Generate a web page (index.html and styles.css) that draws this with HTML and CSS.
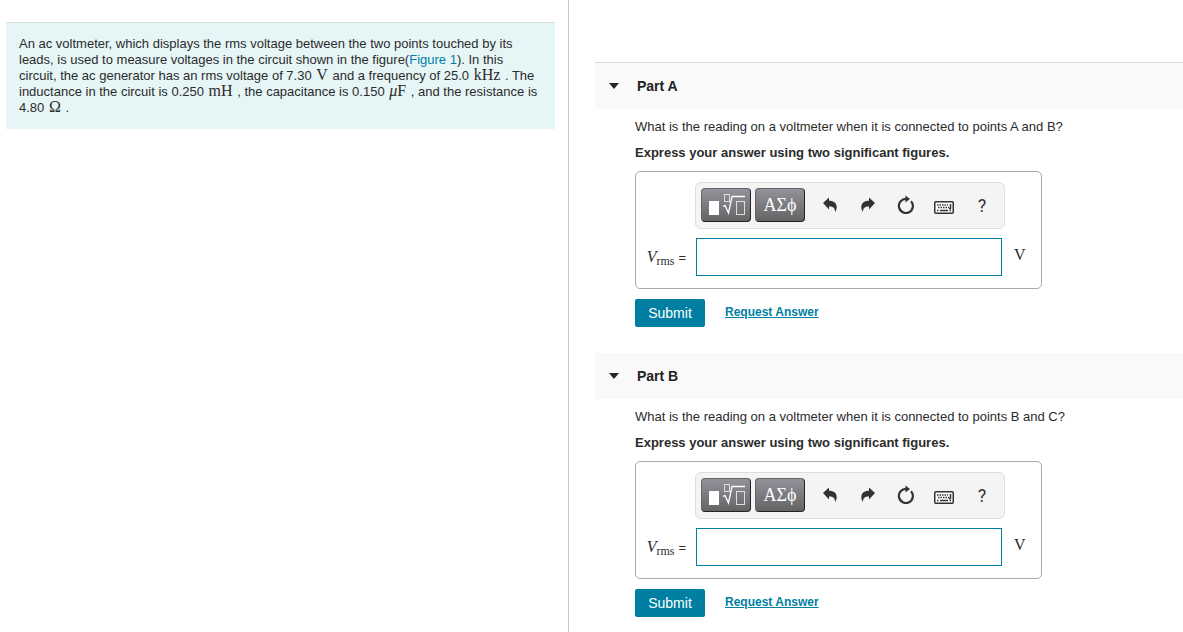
FILE: index.html
```html
<!DOCTYPE html>
<html lang="en">

<head>
  <meta charset="utf-8">
  <meta name="viewport" content="width=device-width">
  <title>Voltmeter Readings</title>
  <link rel="stylesheet" href="styles.css">
</head>

<body>
  <!-- Icons shared by both toolbars -->
  <svg class="icon-defs" width="0" height="0" aria-hidden="true">
    <symbol id="icon-templates" viewBox="0 0 40 24">
      <rect x="3" y="8" width="10" height="14" fill="#fff"/>
      <rect x="18.500" y="1.500" width="5" height="7" fill="none" stroke="#ddd"/>
      <path d="M17 13.500l2-1 3.500 7.500L26 3.500h13" fill="none" stroke="#fff" stroke-width="1.300"/>
      <rect x="30.500" y="8.500" width="8" height="13" fill="none" stroke="#ddd"/>
    </symbol>
    <symbol id="icon-undo" viewBox="0 0 14 16">
      <path d="M0 6L6 .5v3.200c5 0 7.700 2.300 7.700 6.300 0 2-.6 3.600-1.700 5 .2-3.500-1.500-5.500-6-5.500v3z" fill="#333"/>
    </symbol>
    <symbol id="icon-reset" viewBox="0 0 18 20">
      <path d="M14 6.200A7 7 0 1 1 9.500 4" fill="none" stroke="#333" stroke-width="2.200"/>
      <path d="M8.500 .5l4.500 3.500-4.500 3.500z" fill="#333"/>
    </symbol>
    <symbol id="icon-keyboard" viewBox="0 0 20 13">
      <rect x=".75" y=".75" width="18.500" height="11.500" rx="1" fill="#fff" stroke="#333" stroke-width="1.500"/>
      <path d="M3 4h11M4 6.500h11" stroke="#333" stroke-width="1.500" stroke-dasharray="1.500 1"/>
      <path d="M3 9.500h1.500M6 9.500h8M15.500 9.500H17M16.500 3v4.500H15" fill="none" stroke="#333" stroke-width="1.500"/>
    </symbol>
  </svg>

  <div class="page">
    <section class="left-pane">
      <div class="problem">
        An ac voltmeter, which displays the rms voltage between the two points touched by its leads, is used to measure voltages in the circuit shown in the figure(<a href="#">Figure 1</a>). In this circuit, the ac generator has an rms voltage of 7.30 <span class="math">V</span> and a frequency of 25.0 <span class="math">kHz</span> . The inductance in the circuit is 0.250 <span class="math">mH</span> , the capacitance is 0.150 <span class="math"><i>μ</i>F</span> , and the resistance is 4.80 <span class="math">Ω</span> .
      </div>
    </section>

    <main class="right-pane">
      <!-- Part A -->
      <section class="part">
        <h2 class="part-header first"><span class="arrow"></span>Part A</h2>
        <div class="part-body">
          <p>What is the reading on a voltmeter when it is connected to points A and B?</p>
          <p class="instructions">Express your answer using two significant figures.</p>
          <div class="answer-box">
            <div class="toolbar">
              <button class="dark-button" type="button" aria-label="Templates"><svg width="40" height="24"><use href="#icon-templates"/></svg></button>
              <button class="dark-button greek" type="button">ΑΣϕ</button>
              <button class="tool" type="button" aria-label="Undo"><svg width="14" height="16"><use href="#icon-undo"/></svg></button>
              <button class="tool" type="button" aria-label="Redo"><svg class="flip" width="14" height="16"><use href="#icon-undo"/></svg></button>
              <button class="tool" type="button" aria-label="Reset"><svg width="18" height="20"><use href="#icon-reset"/></svg></button>
              <button class="tool keyboard" type="button" aria-label="Keyboard shortcuts"><svg width="20" height="13"><use href="#icon-keyboard"/></svg></button>
              <button class="tool help" type="button">?</button>
            </div>
            <label class="symbol" for="answerA"><i>V</i><sub>rms</sub> <span class="equals">=</span></label>
            <input class="answer" type="text" id="answerA">
            <span class="unit">V</span>
          </div>
          <div class="actions">
            <button class="submit" type="button">Submit</button>
            <a class="request" href="#">Request Answer</a>
          </div>
        </div>
      </section>

      <!-- Part B -->
      <section class="part">
        <h2 class="part-header"><span class="arrow"></span>Part B</h2>
        <div class="part-body">
          <p>What is the reading on a voltmeter when it is connected to points B and C?</p>
          <p class="instructions">Express your answer using two significant figures.</p>
          <div class="answer-box">
            <div class="toolbar">
              <button class="dark-button" type="button" aria-label="Templates"><svg width="40" height="24"><use href="#icon-templates"/></svg></button>
              <button class="dark-button greek" type="button">ΑΣϕ</button>
              <button class="tool" type="button" aria-label="Undo"><svg width="14" height="16"><use href="#icon-undo"/></svg></button>
              <button class="tool" type="button" aria-label="Redo"><svg class="flip" width="14" height="16"><use href="#icon-undo"/></svg></button>
              <button class="tool" type="button" aria-label="Reset"><svg width="18" height="20"><use href="#icon-reset"/></svg></button>
              <button class="tool keyboard" type="button" aria-label="Keyboard shortcuts"><svg width="20" height="13"><use href="#icon-keyboard"/></svg></button>
              <button class="tool help" type="button">?</button>
            </div>
            <label class="symbol" for="answerB"><i>V</i><sub>rms</sub> <span class="equals">=</span></label>
            <input class="answer" type="text" id="answerB">
            <span class="unit">V</span>
          </div>
          <div class="actions">
            <button class="submit" type="button">Submit</button>
            <a class="request" href="#">Request Answer</a>
          </div>
        </div>
      </section>
    </main>
  </div>
</body>

</html>
```

FILE: styles.css
```css
* {
  box-sizing: border-box;
}

body {
  margin: 0;
  background: #fff;
  color: #2b2b2b;
  font-family: "Liberation Sans", Arial, sans-serif;
  font-size: 13px;
  line-height: 16px;
}

.icon-defs {
  display: none;
}

a {
  color: #007fa3;
  text-decoration: none;
}

/* Two panes side by side */
.page {
  display: grid;
  grid-template-columns: 569px 1fr;
  min-height: 100vh;
}

.left-pane {
  padding: 22px 13px 0 6px;
  border-right: 1px solid #b4c8d9;
}

.right-pane {
  padding: 62px 0 0 26px;
}

.problem {
  padding: 13px;
  border-top: 1px solid #d9dede;
  background: #e6f6f7;
}

.math {
  padding: 0 1px;
  font-family: "Liberation Serif", "Times New Roman", serif;
  font-size: 16px;
  line-height: 14px;
}

/* Part headers */
.part-header {
  display: flex;
  align-items: center;
  gap: 18px;
  height: 46px;
  margin: 0;
  padding-left: 14px;
  background: #f9f9f9;
  color: #222;
  font-size: 14px;
}

.part-header.first {
  height: 47px;
  border-top: 1px solid #ddd;
}

.arrow {
  border: 5px solid transparent;
  border-top: 6px solid #252525;
  border-bottom: 0;
}

.part-body {
  padding: 10px 0 26px 40px;
}

.part-body p {
  margin: 0 0 10px;
}

.part-body .instructions {
  font-weight: bold;
}

/* Answer box */
.answer-box {
  display: grid;
  grid-template-columns: 50px 306px auto;
  gap: 9px 10px;
  align-items: center;
  width: 407px;
  padding: 10px 0 12px;
  border: 1px solid #aaa;
  border-radius: 5px;
}

.toolbar {
  grid-column: 1 / 4;
  display: flex;
  width: 310px;
  height: 47px;
  margin-left: 59px;
  padding: 5px;
  border: 1px solid #ddd;
  border-radius: 6px;
  background: #f4f4f4;
}

.dark-button {
  display: flex;
  align-items: center;
  justify-content: center;
  width: 50px;
  height: 34px;
  margin-right: 4px;
  padding: 0;
  border: 1px solid #222;
  border-top-color: #666;
  border-left-color: #666;
  border-radius: 4px;
  background: linear-gradient(#93929a, #646466);
  color: #fff;
}

.greek {
  font-family: "Liberation Serif", "DejaVu Serif", serif;
  font-size: 18px;
}

.tool {
  display: flex;
  align-items: center;
  justify-content: center;
  width: 38px;
  height: 34px;
  padding: 0 0 0 4px;
  border: 0;
  background: none;
  color: #333;
}

.keyboard {
  padding-top: 5px;
}

.help {
  font-family: Roboto, sans-serif;
  font-size: 18px;
}

.flip {
  transform: scaleX(-1);
}

.symbol {
  text-align: right;
  white-space: nowrap;
  font-family: "Liberation Serif", serif;
  font-size: 16px;
}

.symbol sub {
  font-size: 12px;
  line-height: 10px;
  vertical-align: -3px;
}

.equals {
  font-family: "Liberation Sans", Arial, sans-serif;
  font-size: 13px;
}

.answer {
  width: 100%;
  height: 38px;
  padding: 0 8px;
  border: 1px solid #007fa3;
  background: #fff;
  font-size: 16px;
}

.unit {
  padding: 0 0 4px 2px;
  font-family: "Liberation Serif", serif;
  font-size: 16px;
}

/* Submit row */
.actions {
  display: flex;
  gap: 20px;
  margin-top: 10px;
}

.submit {
  width: 70px;
  height: 28px;
  padding: 0;
  border: 0;
  border-radius: 2px;
  background: #007fa3;
  color: #fff;
  font-family: inherit;
  font-size: 14px;
}

.request {
  padding-top: 5px;
  font-size: 12px;
  font-weight: bold;
  text-decoration: underline;
}
```
